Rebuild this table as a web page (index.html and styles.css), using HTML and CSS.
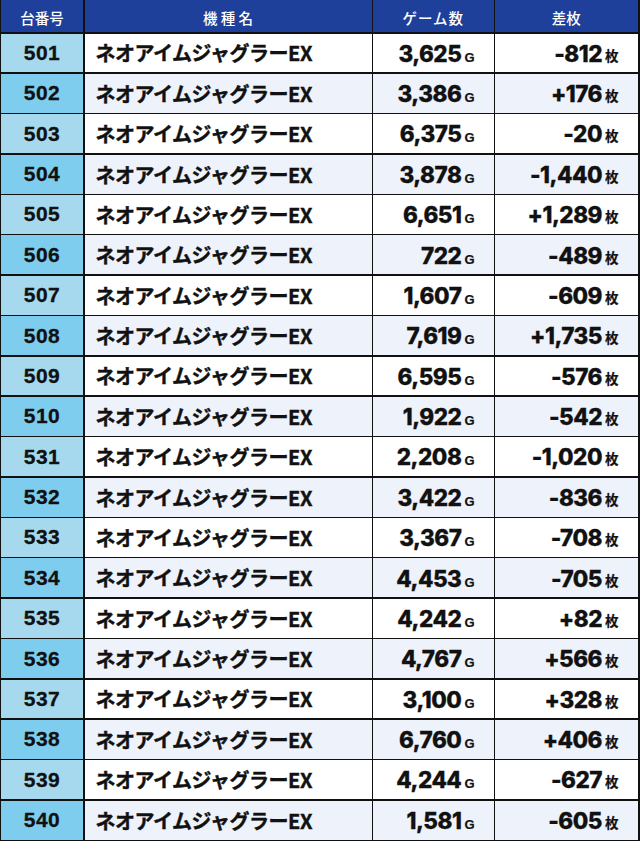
FILE: index.html
```html
<!DOCTYPE html>
<html lang="ja">
<head>
<meta charset="utf-8">
<title>ネオアイムジャグラーEX データ</title>
<link rel="stylesheet" href="styles.css">
</head>
<body>
<div class="table">
  <div class="head">台番号</div>
  <div class="head">機 種 名</div>
  <div class="head wide">ゲーム数</div>
  <div class="head">差枚</div>

  <div class="row"><div class="no">501</div><div class="name">ネオアイムジャグラーEX</div><div class="num"><span class="val">3,625<span class="unit-g">G</span></span></div><div class="num"><span class="val">-812<span class="unit-m">枚</span></span></div></div>
  <div class="row alt"><div class="no">502</div><div class="name">ネオアイムジャグラーEX</div><div class="num"><span class="val">3,386<span class="unit-g">G</span></span></div><div class="num"><span class="val">+176<span class="unit-m">枚</span></span></div></div>
  <div class="row"><div class="no">503</div><div class="name">ネオアイムジャグラーEX</div><div class="num"><span class="val">6,375<span class="unit-g">G</span></span></div><div class="num"><span class="val">-20<span class="unit-m">枚</span></span></div></div>
  <div class="row alt"><div class="no">504</div><div class="name">ネオアイムジャグラーEX</div><div class="num"><span class="val">3,878<span class="unit-g">G</span></span></div><div class="num"><span class="val">-1,440<span class="unit-m">枚</span></span></div></div>
  <div class="row"><div class="no">505</div><div class="name">ネオアイムジャグラーEX</div><div class="num"><span class="val">6,651<span class="unit-g">G</span></span></div><div class="num"><span class="val">+1,289<span class="unit-m">枚</span></span></div></div>
  <div class="row alt"><div class="no">506</div><div class="name">ネオアイムジャグラーEX</div><div class="num"><span class="val">722<span class="unit-g">G</span></span></div><div class="num"><span class="val">-489<span class="unit-m">枚</span></span></div></div>
  <div class="row"><div class="no">507</div><div class="name">ネオアイムジャグラーEX</div><div class="num"><span class="val">1,607<span class="unit-g">G</span></span></div><div class="num"><span class="val">-609<span class="unit-m">枚</span></span></div></div>
  <div class="row alt"><div class="no">508</div><div class="name">ネオアイムジャグラーEX</div><div class="num"><span class="val">7,619<span class="unit-g">G</span></span></div><div class="num"><span class="val">+1,735<span class="unit-m">枚</span></span></div></div>
  <div class="row"><div class="no">509</div><div class="name">ネオアイムジャグラーEX</div><div class="num"><span class="val">6,595<span class="unit-g">G</span></span></div><div class="num"><span class="val">-576<span class="unit-m">枚</span></span></div></div>
  <div class="row alt"><div class="no">510</div><div class="name">ネオアイムジャグラーEX</div><div class="num"><span class="val">1,922<span class="unit-g">G</span></span></div><div class="num"><span class="val">-542<span class="unit-m">枚</span></span></div></div>
  <div class="row"><div class="no">531</div><div class="name">ネオアイムジャグラーEX</div><div class="num"><span class="val">2,208<span class="unit-g">G</span></span></div><div class="num"><span class="val">-1,020<span class="unit-m">枚</span></span></div></div>
  <div class="row alt"><div class="no">532</div><div class="name">ネオアイムジャグラーEX</div><div class="num"><span class="val">3,422<span class="unit-g">G</span></span></div><div class="num"><span class="val">-836<span class="unit-m">枚</span></span></div></div>
  <div class="row"><div class="no">533</div><div class="name">ネオアイムジャグラーEX</div><div class="num"><span class="val">3,367<span class="unit-g">G</span></span></div><div class="num"><span class="val">-708<span class="unit-m">枚</span></span></div></div>
  <div class="row alt"><div class="no">534</div><div class="name">ネオアイムジャグラーEX</div><div class="num"><span class="val">4,453<span class="unit-g">G</span></span></div><div class="num"><span class="val">-705<span class="unit-m">枚</span></span></div></div>
  <div class="row"><div class="no">535</div><div class="name">ネオアイムジャグラーEX</div><div class="num"><span class="val">4,242<span class="unit-g">G</span></span></div><div class="num"><span class="val">+82<span class="unit-m">枚</span></span></div></div>
  <div class="row alt"><div class="no">536</div><div class="name">ネオアイムジャグラーEX</div><div class="num"><span class="val">4,767<span class="unit-g">G</span></span></div><div class="num"><span class="val">+566<span class="unit-m">枚</span></span></div></div>
  <div class="row"><div class="no">537</div><div class="name">ネオアイムジャグラーEX</div><div class="num"><span class="val">3,100<span class="unit-g">G</span></span></div><div class="num"><span class="val">+328<span class="unit-m">枚</span></span></div></div>
  <div class="row alt"><div class="no">538</div><div class="name">ネオアイムジャグラーEX</div><div class="num"><span class="val">6,760<span class="unit-g">G</span></span></div><div class="num"><span class="val">+406<span class="unit-m">枚</span></span></div></div>
  <div class="row"><div class="no">539</div><div class="name">ネオアイムジャグラーEX</div><div class="num"><span class="val">4,244<span class="unit-g">G</span></span></div><div class="num"><span class="val">-627<span class="unit-m">枚</span></span></div></div>
  <div class="row alt"><div class="no">540</div><div class="name">ネオアイムジャグラーEX</div><div class="num"><span class="val">1,581<span class="unit-g">G</span></span></div><div class="num"><span class="val">-605<span class="unit-m">枚</span></span></div></div>
</div>
</body>
</html>
```

FILE: styles.css
```css
html, body {
  margin: 0;
  padding: 0;
  background: #ffffff;
}

.table {
  width: 639.5px;
  height: 841px;
  box-sizing: border-box;
  display: grid;
  grid-template-columns: 82px 287px 120.5px 142.5px;
  grid-template-rows: 32px repeat(20, 1fr);
  gap: 1.5px;
  padding: 0 1.5px 1.5px 1px;
  background: #111111;
  font-family: "Liberation Sans", "Noto Sans CJK JP", sans-serif;
  color: #111111;
}

.row {
  display: contents;
}

.head {
  background: #1e409a;
  color: #ffffff;
  font-family: "Noto Sans CJK JP", sans-serif;
  font-weight: 500;
  font-size: 14.5px;
  display: flex;
  align-items: center;
  justify-content: center;
  padding-top: 3px;
  box-sizing: border-box;
  white-space: pre;
}

.head.wide {
  letter-spacing: 1px;
}

.no {
  background: #a6d9ee;
  display: flex;
  align-items: center;
  justify-content: center;
  font-weight: 700;
  font-size: 21px;
  letter-spacing: 0.5px;
  -webkit-text-stroke: 0.3px #111111;
}

.row.alt .no {
  background: #7fcdee;
}

.name,
.num {
  background: #ffffff;
}

.row.alt .name,
.row.alt .num {
  background: #eef2fb;
}

.name {
  display: flex;
  align-items: center;
  padding-left: 11px;
  font-family: "Noto Sans CJK JP", sans-serif;
  font-weight: 700;
  font-size: 20px;
  letter-spacing: -0.5px;
  -webkit-text-stroke: 0.4px #111111;
}

.num {
  display: flex;
  align-items: center;
  justify-content: flex-end;
  padding-right: 19px;
}

.val {
  font-family: "Inter", "Liberation Sans", sans-serif;
  font-weight: 800;
  font-size: 22.5px;
  letter-spacing: -0.5px;
  line-height: 1;
  white-space: nowrap;
  padding-top: 2px;
  -webkit-text-stroke: 0.3px #111111;
}

.unit-g {
  font-family: "Liberation Sans", sans-serif;
  font-weight: 700;
  font-size: 13px;
  letter-spacing: 0;
  margin-left: 3px;
  -webkit-text-stroke: 0.2px #111111;
}

.unit-m {
  font-family: "Noto Sans CJK JP", sans-serif;
  font-weight: 700;
  font-size: 13.5px;
  letter-spacing: 0;
  margin-left: 3px;
  vertical-align: 1px;
  -webkit-text-stroke: 0.2px #111111;
}
```
